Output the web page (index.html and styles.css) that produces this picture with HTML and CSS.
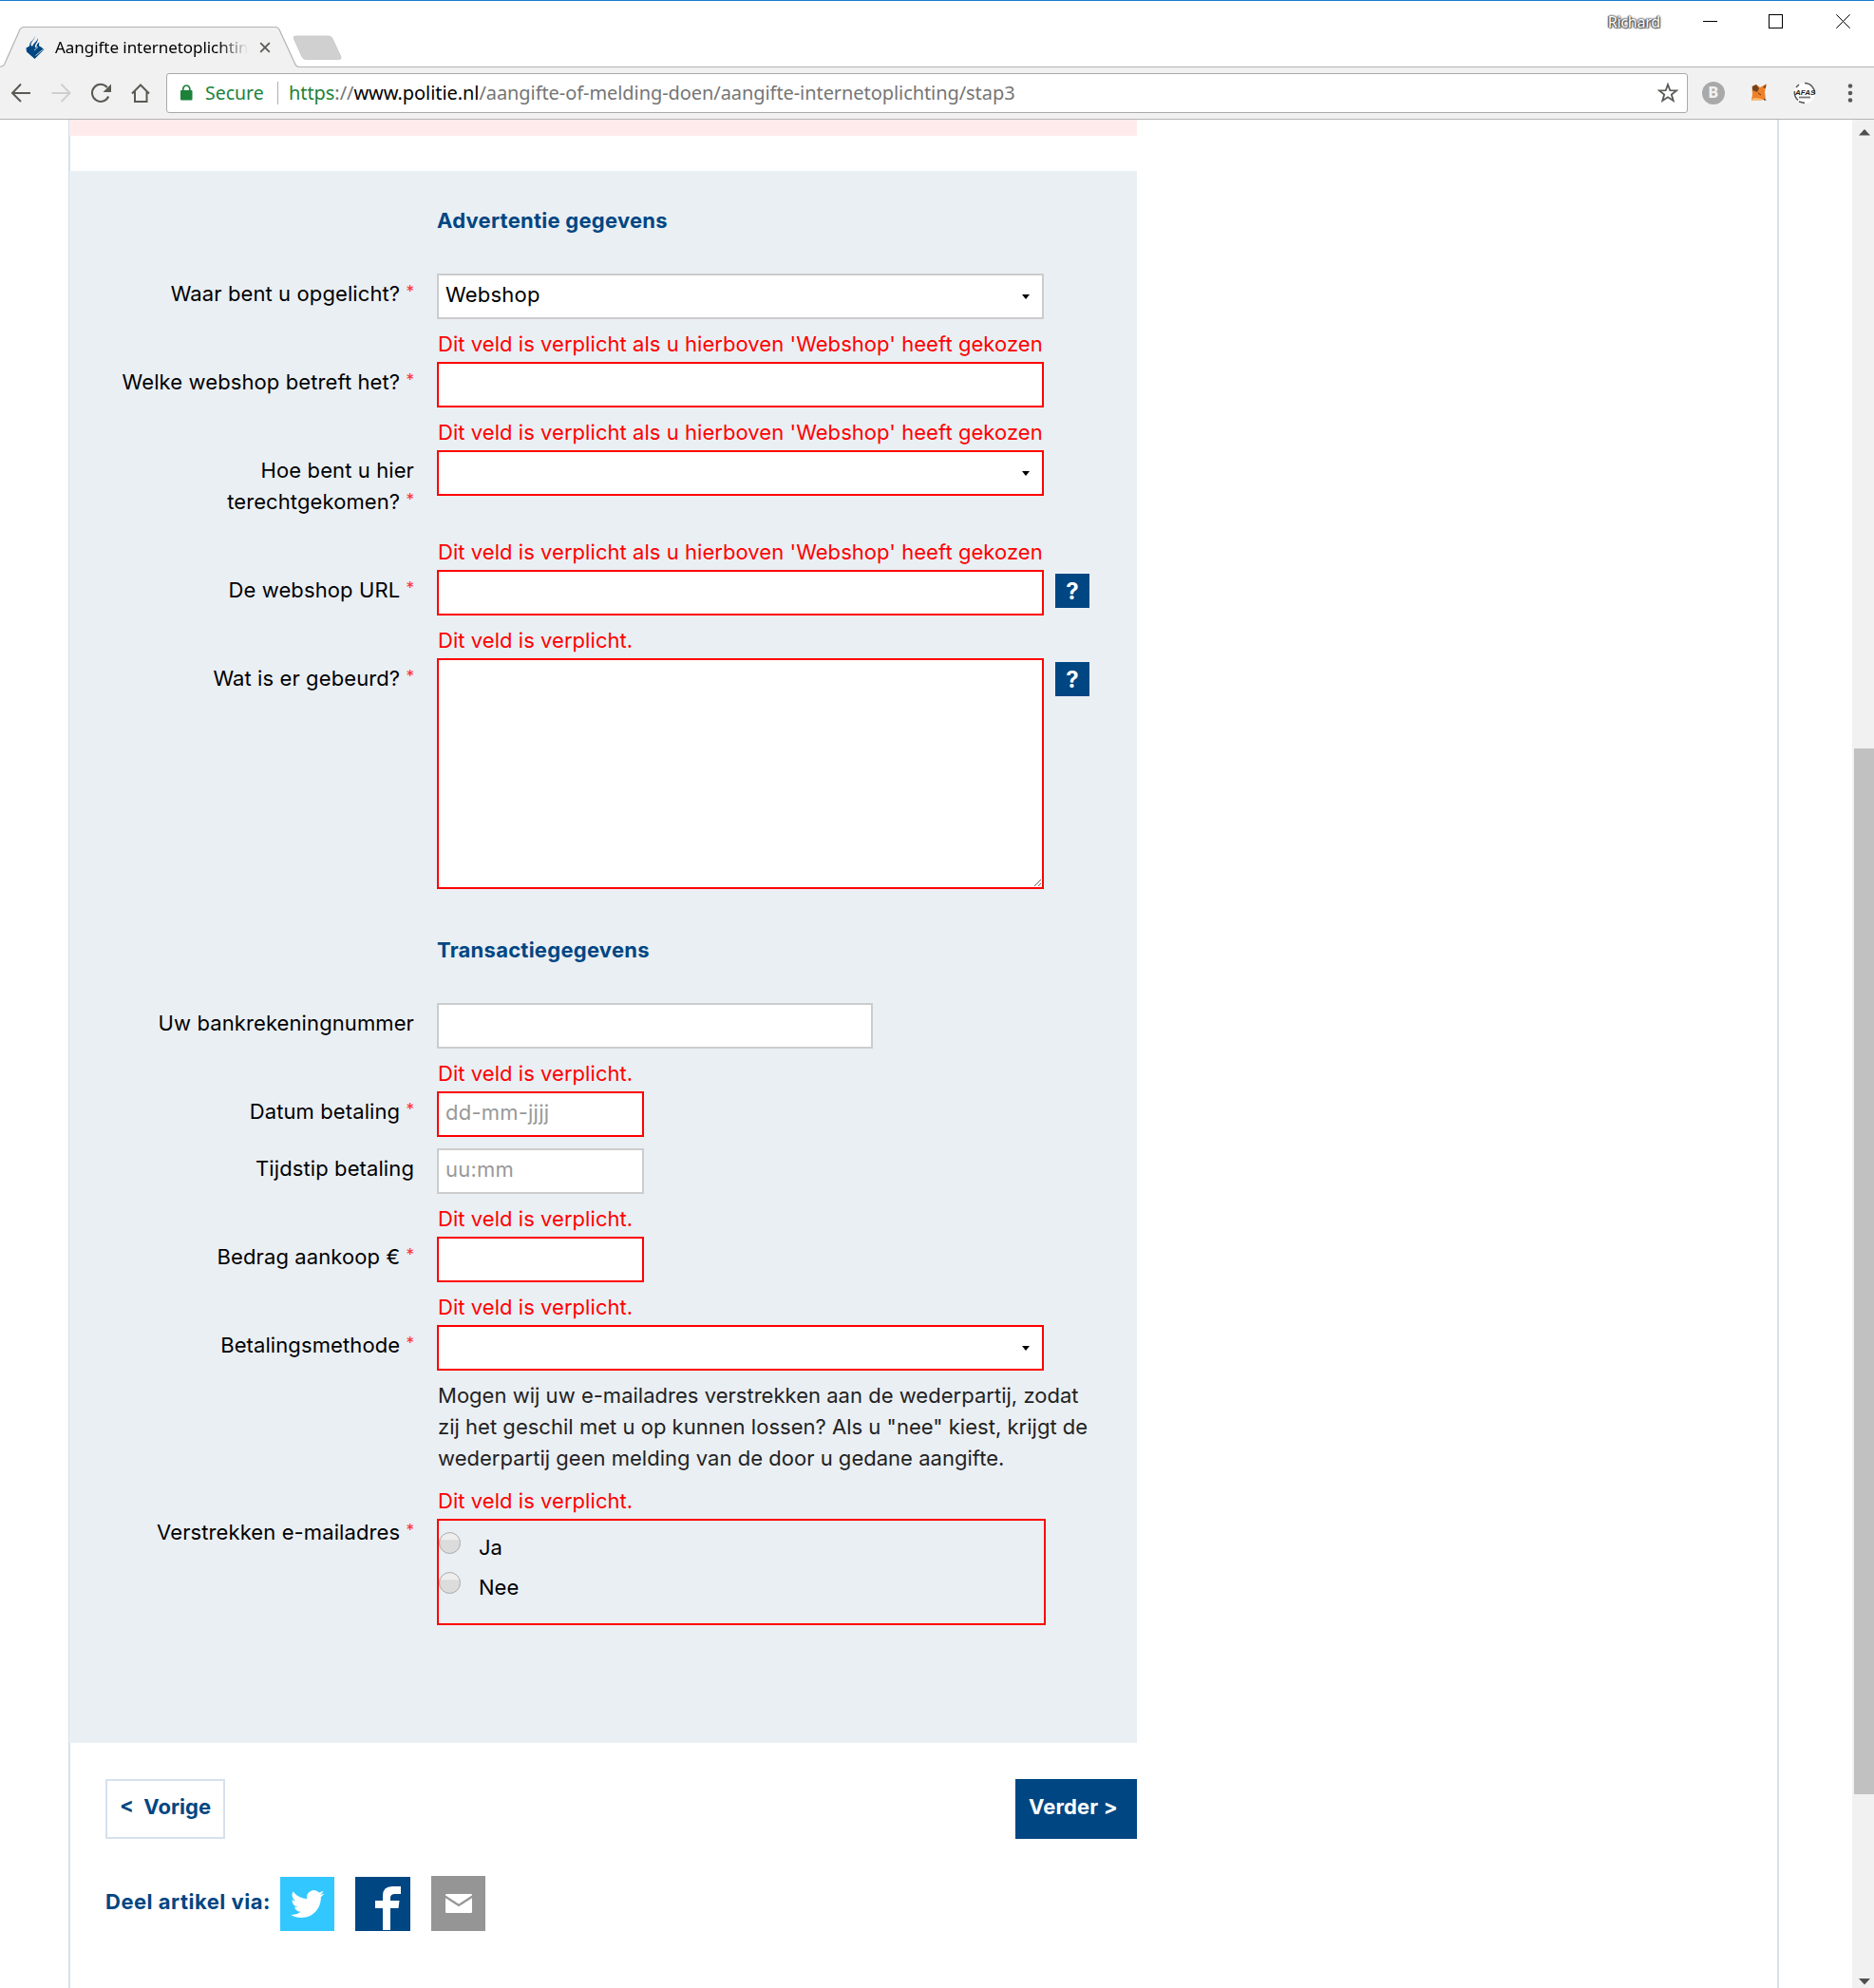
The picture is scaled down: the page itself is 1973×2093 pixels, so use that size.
FILE: index.html
```html
<!DOCTYPE html>
<html lang="nl">
<head>
<meta charset="utf-8">
<title>Aangifte internetoplichting</title>
<link rel="stylesheet" href="styles.css">
</head>
<body>
<header class="browser">
  <div class="tabstrip">
    <svg class="tab-shape" width="1973" height="43" viewBox="0 28 1973 43">
      <path d="M0 71V70.5H1.500Q3.500 70.500 4.500 68L21 31Q22.500 28.500 25 28.500H290Q292.500 28.500 294 31L311 68Q312 70.500 315 70.500H1973V71Z" fill="#f1f1f1"/>
      <path d="M0 70Q3 70.500 4.500 68L21 31Q22.500 28.500 25 28.500H290Q292.500 28.500 294 31L311 68Q312 70.500 315 70.500H1973" fill="none" stroke="#b3b3b3" stroke-width="1.200"/>
      <path d="M311 38H346Q349 38 350 40.500L359 60Q359.500 62.500 357 62.500H322Q319.500 62.500 318 60L309.500 41Q308.500 38 311 38Z" fill="#d0d0d0" stroke="#c2c2c2" stroke-width=".7"/>
    </svg>
    <svg class="favicon" width="20" height="25" viewBox="27 37 20 25">
      <path d="M36.500 37.500C37.500 41 32.500 43.500 32.500 47.500L34 49C35 45.500 39.500 43.500 39.500 40C41 44 36 46.500 37 50H38.500C38.500 47.500 39 45.500 41.500 44.500C40.500 47.500 41 49 42.500 49L46.500 52L36.500 62L28 54.500L27.500 50.500L31 48.500C31 43 37 42 36.500 37.500Z" fill="#004682"/>
      <path d="M37.500 58.500L46 51.500M36 53L40 49.500" fill="none" stroke="#f1f1f1" stroke-width=".8"/>
    </svg>
    <span class="tab-title">Aangifte internetoplichtin</span>
    <svg class="tab-close" width="12" height="12" viewBox="0 0 12 12"><path d="M1.200 1.200L10.800 10.800M10.800 1.200L1.200 10.800" stroke="#5a5a55" stroke-width="1.800"/></svg>
    <div class="window-controls">
      <span class="user">Richard</span>
      <svg width="157" height="17" viewBox="1792 14 157 17" fill="none" stroke="#000" stroke-width="1">
        <path d="M1793 22.500H1808"/><rect x="1862.500" y="15.500" width="14" height="14"/><path d="M1933.300 15.300L1947.700 29.700M1947.700 15.300L1933.300 29.700"/>
      </svg>
    </div>
  </div>
  <div class="toolbar">
    <svg class="nav" width="150" height="24" viewBox="10 86 150 24" fill="none" stroke="#5a5a55" stroke-width="2">
      <path d="M32 98H13.500M22 88.500L13 98L22 107"/>
      <path d="M54.500 98H73M64.500 88.500L73.500 98L64.500 107" stroke="#cfcfcf"/>
      <path d="M114.200 101.500A9 9 0 1 1 112.800 92"/><path d="M117 88.500V97H108.500Z" fill="#5a5a55" stroke="none"/>
      <path d="M139 98.500L148 89.500L157 98.500M142 96V107H154.500V96"/>
    </svg>
    <div class="omnibox">
      <svg class="lock" width="13" height="17" viewBox="0 0 13 17"><rect x="0" y="6" width="12.500" height="10.500" rx="1" fill="#1c8239"/><path d="M2.800 7V4.500a3.500 3.500 0 0 1 7 0V7" fill="none" stroke="#1c8239" stroke-width="1.700"/></svg>
      <span class="secure">Secure</span>
      <span class="divider"></span>
      <span class="url"><span class="scheme">https</span>://<span class="host">www.politie.nl</span>/aangifte-of-melding-doen/aangifte-internetoplichting/stap3</span>
      <svg class="star" width="22" height="22" viewBox="0 0 22 22"><path d="M11 2L13.300 8.200L20 8.400L14.800 12.600L16.700 19L11 15.300L5.300 19L7.200 12.600L2 8.400L8.700 8.200Z" fill="none" stroke="#5a5a55" stroke-width="1.800"/></svg>
    </div>
    <span class="ext-b">B</span>
    <svg class="fox" width="18" height="19" viewBox="0 0 18 19">
      <path d="M1.500 3L6 1L10 4L16.500 .5L15 9L16 17H10L1 18L2 11Z" fill="#f08028"/>
      <path d="M2 3L6 1L9 5L7 9L2 7ZM13 4L16.500 .5L16 5Z" fill="#74421f"/><path d="M8 10L11 12" stroke="#58402c"/><path d="M1 17L4 15L12 16V18H2Z" fill="#f6bd79"/><path d="M14 16L17 17.500H14Z" fill="#222"/>
    </svg>
    <span class="afas">
      <svg width="24" height="24" viewBox="0 0 24 24"><circle cx="12" cy="12" r="11" fill="#fff"/><path d="M5 19.500A10.500 10.500 0 0 1 1.500 10M12 1.500A10.500 10.500 0 0 1 22.500 13M6 21L12 22.500M3 6L6 3" fill="none" stroke="#555" stroke-width="1.500"/><path d="M6 16.500H18" stroke="#777" stroke-width="1.800"/></svg>
      <b>AFAS</b>
    </span>
    <svg class="menu" width="6" height="22" viewBox="0 0 6 22" fill="#5a5a55"><circle cx="3" cy="3.500" r="2.300"/><circle cx="3" cy="11" r="2.300"/><circle cx="3" cy="18.500" r="2.300"/></svg>
  </div>
</header>
<div class="viewport">
  <main class="page">
    <div class="alert"></div>
    <form class="form">
      <h2>Advertentie gegevens</h2>
      <div class="row"><label>Waar bent u opgelicht? <i>*</i></label><div class="field"><div class="select"><span>Webshop</span></div></div></div>
      <div class="row"><p class="error">Dit veld is verplicht als u hierboven 'Webshop' heeft gekozen</p><label>Welke webshop betreft het? <i>*</i></label><div class="field"><input class="invalid"></div></div>
      <div class="row"><p class="error">Dit veld is verplicht als u hierboven 'Webshop' heeft gekozen</p><label>Hoe bent u hier terechtgekomen? <i>*</i></label><div class="field"><div class="select invalid"></div></div></div>
      <div class="row"><p class="error">Dit veld is verplicht als u hierboven 'Webshop' heeft gekozen</p><label>De webshop URL <i>*</i></label><div class="field"><input class="invalid"><span class="help">?</span></div></div>
      <div class="row"><p class="error">Dit veld is verplicht.</p><label>Wat is er gebeurd? <i>*</i></label><div class="field"><textarea class="invalid"></textarea><span class="help">?</span></div></div>
      <h2>Transactiegegevens</h2>
      <div class="row"><label>Uw bankrekeningnummer</label><div class="field"><input class="medium"></div></div>
      <div class="row"><p class="error">Dit veld is verplicht.</p><label>Datum betaling <i>*</i></label><div class="field"><input class="short invalid" placeholder="dd-mm-jjjj"></div></div>
      <div class="row"><label>Tijdstip betaling</label><div class="field"><input class="short" placeholder="uu:mm"></div></div>
      <div class="row"><p class="error">Dit veld is verplicht.</p><label>Bedrag aankoop € <i>*</i></label><div class="field"><input class="short invalid"></div></div>
      <div class="row"><p class="error">Dit veld is verplicht.</p><label>Betalingsmethode <i>*</i></label><div class="field"><div class="select invalid"></div></div></div>
      <p class="note">Mogen wij uw e-mailadres verstrekken aan de wederpartij, zodat<br>zij het geschil met u op kunnen lossen? Als u "nee" kiest, krijgt de<br>wederpartij geen melding van de door u gedane aangifte.</p>
      <div class="row"><p class="error">Dit veld is verplicht.</p><label class="raised">Verstrekken e-mailadres <i>*</i></label>
        <div class="radios"><div class="option"><span class="radio"></span>Ja</div><div class="option"><span class="radio"></span>Nee</div></div>
      </div>
    </form>
    <div class="actions"><a class="btn prev">&lt;&nbsp; Vorige</a><a class="btn next">Verder &gt;</a></div>
    <div class="share">
      <b>Deel artikel via:</b>
      <span class="tile twitter"><svg width="36" height="32" viewBox="0 0 24 20"><path d="M23.600 2.400a9.600 9.600 0 0 1-2.800.8A4.900 4.900 0 0 0 23 .5a9.700 9.700 0 0 1-3.100 1.200 4.850 4.850 0 0 0-8.300 4.400A13.700 13.700 0 0 1 1.700 1a4.850 4.850 0 0 0 1.500 6.500 4.800 4.800 0 0 1-2.200-.6 4.850 4.850 0 0 0 3.900 4.800 4.800 4.800 0 0 1-2.200.1 4.850 4.850 0 0 0 4.500 3.400A9.700 9.700 0 0 1 0 17.200a13.700 13.700 0 0 0 7.500 2.200c9 0 14-7.500 13.700-14.600a9.900 9.900 0 0 0 2.400-2.400Z" fill="#fff"/></svg></span>
      <span class="tile facebook"><svg width="58" height="57" viewBox="0 0 58 57"><path d="M29 56V33H21V25H29V20Q29 10 39 10H48V18H42Q37 18 37 22V25H46.500L45.500 33H37V56Z" fill="#fff"/></svg></span>
      <span class="tile mail"><svg width="28" height="20" viewBox="0 0 28 20"><rect width="28" height="20" rx="1" fill="#fff"/><path d="M-.5 2.500L14 12L28.500 2.500" fill="none" stroke="#959595" stroke-width="2.200"/></svg></span>
    </div>
  </main>
  <div class="scrollbar">
    <svg width="12" height="7" viewBox="0 0 12 7"><path d="M0 6.500L6 0L12 6.500Z" fill="#505050"/></svg>
    <span class="thumb"></span>
    <svg class="down" width="12" height="7" viewBox="0 0 12 7"><path d="M0 0H12L6 6.500Z" fill="#505050"/></svg>
  </div>
</div>
</body>
</html>
```
FILE: styles.css
```css
* { box-sizing: border-box; }
body { margin: 0; height: 2093px; overflow: hidden; background: #fff; color: #000; font: 22px/33px Inter, "Liberation Sans", sans-serif; }
svg { display: block; flex: none; }
i { font-style: normal; }

.browser { font-family: "Noto Sans", sans-serif; height: 126px; }
.tabstrip { position: relative; display: flex; height: 71px; border-top: 1px solid #1a7dd0; }
.tab-shape { position: absolute; left: 0; top: 27px; }
.favicon, .tab-title, .tab-close { position: relative; }
.favicon { margin: 36px 0 0 27px; }
.tab-title { width: 203px; margin: 32px 12px 0 11px; height: 34px; white-space: nowrap; font-size: 17px; letter-spacing: -.05px; -webkit-mask-image: linear-gradient(90deg, #000 172px, transparent 203px); mask-image: linear-gradient(90deg, #000 172px, transparent 203px); }
.tab-close { margin-top: 43px; }
.window-controls { display: flex; margin: 0 24px 0 auto; }
.user { margin: 6px 44px 0 0; font-size: 16px; letter-spacing: -.2px; color: #fff; text-shadow: 0 0 2px #444, 0 0 2px #444, 1px 1px 1px #666, -1px 0 1px #666, 0 0 3px #888; }
.window-controls svg { margin-top: 13px; }
.toolbar { display: flex; align-items: center; height: 55px; padding: 0 0 1px 10px; background: #f1f1f1; border-bottom: 1px solid #b3b3b3; }
.omnibox { display: flex; align-items: center; width: 1602px; height: 42px; margin-left: 15px; padding: 0 9px 0 14px; background: #fff; border: 1px solid #a9a9a9; border-radius: 3px; font-size: 20px; }
.secure { width: 62px; margin-left: 13px; font-size: 19.500px; color: #1c8239; }
.divider { width: 1px; height: 24px; margin: 0 11px 0 14px; background: #b0b0b0; }
.url { color: #757575; white-space: nowrap; letter-spacing: -.07px; }
.scheme { color: #1c8239; }
.host { color: #000; }
.star { margin-left: auto; }
.ext-b { width: 24px; height: 24px; margin-left: 15px; border-radius: 50%; background: #a9a9a9; color: #f1f1f1; font: 900 16px/24px Roboto, sans-serif; text-align: center; }
.fox { margin-left: 27px; }
.afas { position: relative; margin-left: 27px; }
.afas b { position: absolute; left: 2px; top: 6px; font: italic bold 8px/11px "Liberation Sans", sans-serif; color: #222; }
.menu { margin-left: 33px; }

.viewport { display: flex; justify-content: space-between; height: 1967px; }
.page { width: 1801px; margin-left: 72px; border: solid #d5e1ec; border-width: 0 2px; }
.alert { width: 1124px; height: 17px; margin-left: -1px; background: #ffebeb; }
.form { width: 1124px; height: 1655px; margin: 37px 0 0 -1px; background: #eaeff4; }
h2 { margin: 0; height: 108px; padding: 36px 0 0 387px; font-size: 22px; line-height: 33px; letter-spacing: .25px; color: #004682; }
.row { display: grid; grid-template-columns: 363px 1fr; column-gap: 24px; margin-bottom: 12px; }
.error { grid-column: 2; margin: 0; padding: 0 0 5px 1px; line-height: 28px; color: #f00; letter-spacing: .05px; }
label { grid-column: 1; justify-self: end; max-width: 320px; padding: 5px 0 10px; text-align: right; letter-spacing: .1px; }
label.raised { padding-top: 0; margin-top: -2px; }
label i { font-size: 17px; line-height: 16px; vertical-align: 4px; color: #ff2a2a; letter-spacing: 0; }
.field { display: flex; align-items: flex-start; }
input, textarea, .select { width: 639px; height: 48px; margin: 0; padding: 0 7px 4px; background: #fff; border: 2px solid #ccc; border-radius: 0; font: inherit; letter-spacing: .22px; outline: 0; }
textarea { height: 243px; }
.select { display: flex; align-items: center; padding-right: 13px; }
.select::after { content: ""; margin: 5px 0 0 auto; border: solid transparent; border-width: 5px 4.500px 0; border-top-color: #000; }
.medium { width: 459px; }
.short { width: 218px; }
.invalid { border-color: #f00; }
::placeholder { color: #999; opacity: 1; }
.help { width: 36px; height: 36px; margin: 4px 0 0 12px; background: #004682; color: #fff; font-weight: 700; font-size: 24px; line-height: 38px; text-align: center; }
.note { margin: -2px 0 14px 388px; color: #222; letter-spacing: .02px; white-space: nowrap; }
.radios { width: 641px; height: 112px; padding-top: 12px; border: 2px solid #f00; }
.option { display: flex; height: 42px; line-height: 33px; }
.radio { width: 23px; height: 23px; margin-right: 19px; border: 1px solid #aaa; border-radius: 50%; background: linear-gradient(#eee 0 35%, #dcdcdc 36%); }
.actions { display: flex; justify-content: space-between; width: 1123px; margin-top: 38px; padding-left: 37px; }
.btn { height: 63px; padding: 11px 12px 0 13px; border: 2px solid #d5e1ec; font-weight: 700; color: #004682; white-space: pre; }
.prev { width: 126px; }
.next { width: 128px; padding-left: 12px; background: #004682; border-color: #004682; color: #fff; letter-spacing: .15px; }
.share { display: flex; align-items: flex-end; height: 97px; padding-left: 37px; }
.share b { width: 184px; margin-bottom: 14px; letter-spacing: .5px; color: #004682; }
.tile { display: flex; align-items: center; justify-content: center; width: 57px; height: 57px; }
.twitter { background: #33c7ff; }
.facebook { width: 58px; margin-left: 22px; background: #004682; }
.mail { height: 58px; margin-left: 22px; background: #959595; }
.scrollbar { display: flex; flex-direction: column; align-items: center; width: 23px; padding: 10px 0 3px 2px; background: #f1f1f1; }
.thumb { width: 21px; height: 1101px; margin-top: 645px; background: #c1c1c1; }
.down { margin-top: auto; }
```
